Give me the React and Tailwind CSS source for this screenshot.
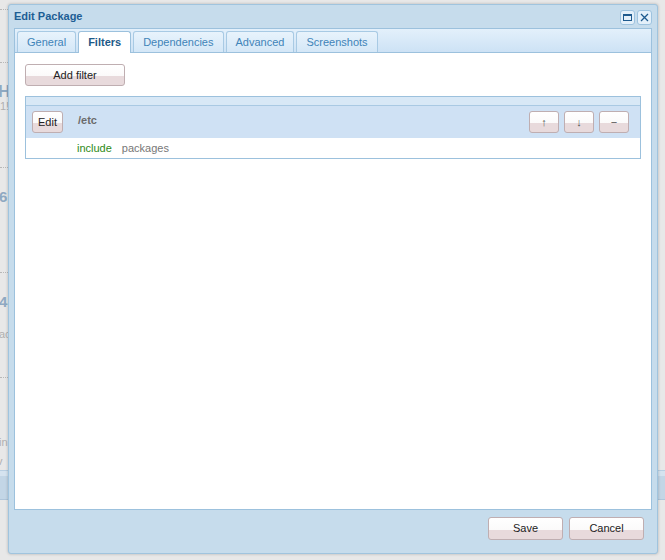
import React from "react";

const btn =
  "flex items-center justify-center rounded-[3px] border border-[#bfaeb1] bg-[linear-gradient(to_bottom,#ffffff_0%,#fbfafa_55%,#e8dadc_55%,#e8dadc_100%)] text-[11px] text-[#222]";

export default function App() {
  const tabs = ["General", "Filters", "Dependencies", "Advanced", "Screenshots"];
  return (
    <div
      className="relative w-[665px] h-[560px] overflow-hidden bg-[#e8e8e8]"
      style={{ fontFamily: '"Liberation Sans", Arial, sans-serif' }}
    >
      {/* background page (mostly covered) */}
      <div className="flex flex-col w-[665px] text-[#b0b0b0]">
        <div className="h-[10px] border-b border-dotted border-[#b8b8b8] w-[10px]" />
        <div className="h-[53px] border-b border-dotted border-[#b8b8b8] w-[10px]" />
        <div className="h-[105px] border-b border-dotted border-[#b8b8b8] w-[10px] flex flex-col pt-[20px] leading-none">
          <span className="text-[17px] font-bold text-[#8fa9c2] -ml-[2px]">H</span>
          <span className="text-[11px] mt-[1px]">1!</span>
        </div>
        <div className="h-[105px] border-b border-dotted border-[#b8b8b8] w-[10px] flex flex-col pt-[21px] leading-none">
          <span className="text-[15px] font-bold text-[#8fa9c2] -ml-[1px]">6</span>
        </div>
        <div className="h-[105px] border-b border-dotted border-[#b8b8b8] w-[10px] flex flex-col pt-[21px] leading-none">
          <span className="text-[15px] font-bold text-[#8fa9c2] -ml-[1px]">4</span>
          <span className="text-[11px] mt-[20px] -ml-[1px]">ac</span>
        </div>
        <div className="h-[92px] w-[10px] flex flex-col pt-[59px] leading-none text-[11px]">
          <span className="-ml-[1px]">in</span>
          <span className="mt-[8px] -ml-[3px]">v</span>
        </div>
        <div className="h-[6px] bg-[#d5e3ef] border-t border-[#b9cfe2]" />
        <div className="h-[24px] bg-[#c3d6e6] border-b border-[#b0c6da]" />
      </div>

      {/* dialog */}
      <div className="absolute left-[8px] top-[4px] w-[650px] h-[550px] flex flex-col rounded-[3px] border border-[#a0c4de] bg-[#c6dcec] shadow-[0_0_3px_rgba(0,0,0,0.25)]">
        {/* title bar */}
        <div className="h-[23px] flex items-center pl-[5px] pr-[5px]">
          <span className="text-[11px] font-bold text-[#1d5e94] mt-[-1px]">Edit Package</span>
          <div className="ml-auto flex gap-[2px] mt-[1px]">
            <div className="w-[15px] h-[15px] rounded-[3px] border border-[#9ec3df] bg-[#e4f0fa] flex items-center justify-center">
              <div className="w-[9px] h-[7px] border border-[#1e5a8e] border-t-[2px]" />
            </div>
            <div className="w-[15px] h-[15px] rounded-[3px] border border-[#9ec3df] bg-[#e4f0fa] flex items-center justify-center">
              <svg width="9" height="9" viewBox="0 0 9 9">
                <path d="M1 1L8 8M8 1L1 8" stroke="#1e5a8e" strokeWidth="1.3" />
              </svg>
            </div>
          </div>
        </div>

        {/* tabs panel */}
        <div className="mx-[5px] h-[482px] flex flex-col border border-[#9cc1dd] bg-white">
          <div className="h-[24px] flex items-end gap-[2px] pl-[2px] border-b border-[#9cc1dd] bg-[linear-gradient(to_bottom,#e3f0fb,#cde2f5)]">
            {tabs.map((t) => {
              const active = t === "Filters";
              return (
                <div
                  key={t}
                  className={
                    active
                      ? "h-[22px] -mb-[1px] px-[9px] flex items-center border border-b-0 border-[#9cc1dd] rounded-t-[3px] bg-white text-[11px] font-bold text-[#1d5a88]"
                      : "h-[21px] px-[9px] flex items-center border border-b-0 border-[#a8cae4] rounded-t-[3px] bg-[linear-gradient(to_bottom,#e8f3fc,#d4e7f7)] text-[11px] text-[#3f84b8]"
                  }
                >
                  {t}
                </div>
              );
            })}
          </div>

          <div className="px-[10px] pt-[11px] flex flex-col">
            <button className={`${btn} w-[100px] h-[22px]`}>Add filter</button>

            <div className="mt-[10px] border border-[#9cc1dd] flex flex-col">
              <div className="h-[9px] bg-[#d8e8f6] border-b border-[#a9c9e3]" />
              <div className="h-[32px] bg-[#cfe1f4] flex items-center pl-[6px] pr-[11px]">
                <button className={`${btn} w-[31px] h-[22px]`}>Edit</button>
                <span className="ml-[15px] text-[11px] font-bold text-[#6b6b6b] -mt-[4px]">/etc</span>
                <div className="ml-auto flex gap-[5px]">
                  <button className={`${btn} w-[30px] h-[22px] text-[#555]`}>↑</button>
                  <button className={`${btn} w-[30px] h-[22px] text-[#555]`}>↓</button>
                  <button className={`${btn} w-[30px] h-[22px] text-[#555]`}>−</button>
                </div>
              </div>
              <div className="h-[20px] flex items-center pl-[51px] text-[11px]">
                <span className="text-[#2d8a16]">include</span>
                <span className="ml-[10px] text-[#777]">packages</span>
              </div>
            </div>
          </div>
        </div>

        {/* footer */}
        <div className="flex justify-end gap-[6px] pr-[13px] pt-[7px]">
          <button className={`${btn} w-[75px] h-[23px]`}>Save</button>
          <button className={`${btn} w-[75px] h-[23px]`}>Cancel</button>
        </div>
      </div>
    </div>
  );
}
